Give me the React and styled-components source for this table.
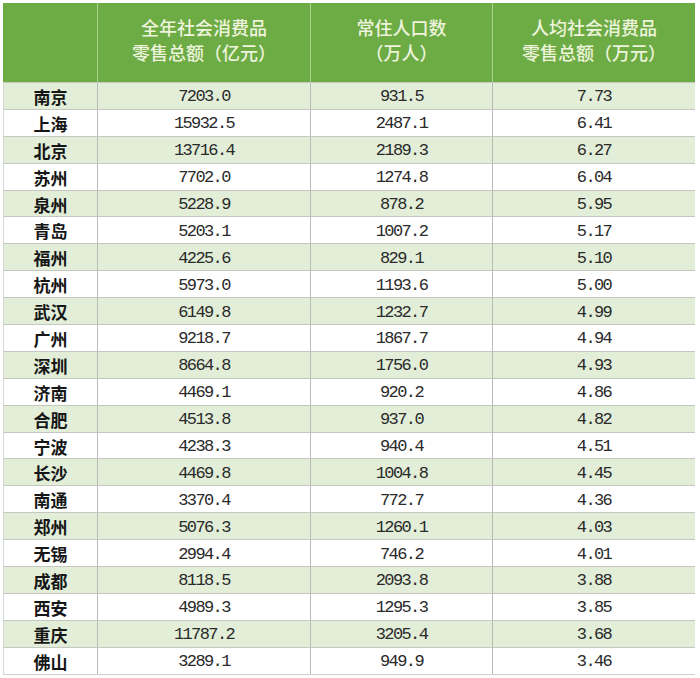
import React from 'react';
import styled, { createGlobalStyle } from 'styled-components';

const Global = createGlobalStyle`
  html, body { margin: 0; padding: 0; background: #fff; }
  body { width: 700px; height: 678px; overflow: hidden; }
`;

const rows = [
  ['南京', '7203.0', '931.5', '7.73'],
  ['上海', '15932.5', '2487.1', '6.41'],
  ['北京', '13716.4', '2189.3', '6.27'],
  ['苏州', '7702.0', '1274.8', '6.04'],
  ['泉州', '5228.9', '878.2', '5.95'],
  ['青岛', '5203.1', '1007.2', '5.17'],
  ['福州', '4225.6', '829.1', '5.10'],
  ['杭州', '5973.0', '1193.6', '5.00'],
  ['武汉', '6149.8', '1232.7', '4.99'],
  ['广州', '9218.7', '1867.7', '4.94'],
  ['深圳', '8664.8', '1756.0', '4.93'],
  ['济南', '4469.1', '920.2', '4.86'],
  ['合肥', '4513.8', '937.0', '4.82'],
  ['宁波', '4238.3', '940.4', '4.51'],
  ['长沙', '4469.8', '1004.8', '4.45'],
  ['南通', '3370.4', '772.7', '4.36'],
  ['郑州', '5076.3', '1260.1', '4.03'],
  ['无锡', '2994.4', '746.2', '4.01'],
  ['成都', '8118.5', '2093.8', '3.88'],
  ['西安', '4989.3', '1295.3', '3.85'],
  ['重庆', '11787.2', '3205.4', '3.68'],
  ['佛山', '3289.1', '949.9', '3.46'],
];

const Page = styled.div`
  padding: 3px 5px 0 3px;
`;

const Table = styled.div`
  display: grid;
  grid-template-columns: 94px 213px 182px 203px;
  border-right: 1px solid #d4d4d4;
  border-bottom: 1px solid #cfcfcf;
`;

const HeadCell = styled.div`
  height: 79px;
  background: #6dab45;
  border-left: 1px solid ${p => (p.$first ? '#6dab45' : '#a8d18c')};
  display: flex;
  flex-direction: column;
  align-items: center;
  justify-content: center;
  gap: 3px;
  color: #eef4dc;
  font-family: "Noto Sans CJK SC", sans-serif;
  font-size: 18px;
  font-weight: 500;
  line-height: 22px;
  padding-bottom: 7px;
  box-sizing: border-box;
`;

const Cell = styled.div`
  height: 26.9px;
  box-sizing: border-box;
  background: ${p => (p.$alt ? '#e2eed8' : '#ffffff')};
  border-top: 1px solid #c4c8c0;
  border-left: 1px solid ${p => (p.$first ? '#d8d8d8' : '#b9bcb6')};
  display: flex;
  align-items: center;
  justify-content: center;
  color: #222;
`;

const City = styled(Cell)`
  font-family: "Noto Sans CJK SC", sans-serif;
  font-size: 17px;
  font-weight: 700;
  color: #161616;
  padding-top: 1px;
`;

const Num = styled(Cell)`
  font-family: "Liberation Mono", monospace;
  font-size: 17px;
  letter-spacing: -1.6px;
  color: #2a2a2a;
  padding-top: 2px;
`;

export default function App() {
  return (
    <Page>
      <Global />
      <Table>
        <HeadCell $first />
        <HeadCell>
          <span>全年社会消费品</span>
          <span>零售总额（亿元）</span>
        </HeadCell>
        <HeadCell>
          <span>常住人口数</span>
          <span>（万人）</span>
        </HeadCell>
        <HeadCell>
          <span>人均社会消费品</span>
          <span>零售总额（万元）</span>
        </HeadCell>
        {rows.map((r, i) => (
          <React.Fragment key={r[0]}>
            <City $first $alt={i % 2 === 0}>{r[0]}</City>
            <Num $alt={i % 2 === 0}>{r[1]}</Num>
            <Num $alt={i % 2 === 0}>{r[2]}</Num>
            <Num $alt={i % 2 === 0}>{r[3]}</Num>
          </React.Fragment>
        ))}
      </Table>
    </Page>
  );
}
